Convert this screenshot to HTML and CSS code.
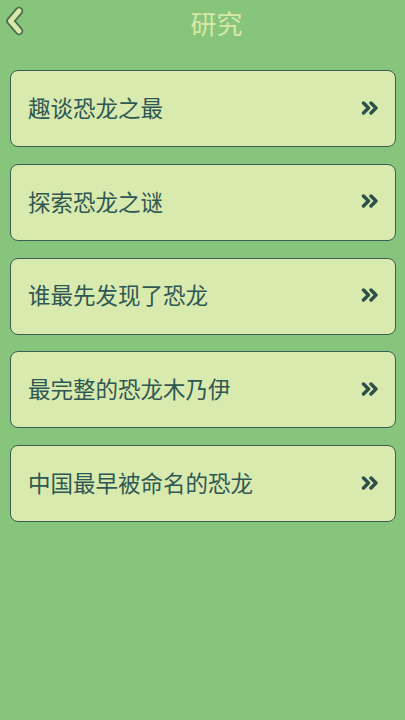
FILE: index.html
```html
<!DOCTYPE html>
<html lang="zh">
<head>
<meta charset="utf-8">
<link rel="stylesheet" href="styles.css">
</head>
<body>
<div class="page">
  <header class="topbar">
    <button class="back" aria-label="返回">
      <svg width="22" height="30" viewBox="0 0 22 30">
        <path d="M15 5 L6.5 15 L15 25" fill="none" stroke="#4d6e4f" stroke-width="8.5" stroke-linecap="round" stroke-linejoin="round"/>
        <path d="M15 5 L6.5 15 L15 25" fill="none" stroke="#d8e9aa" stroke-width="5" stroke-linecap="round" stroke-linejoin="round"/>
      </svg>
    </button>
    <h1 class="title">研究</h1>
  </header>
  <ul class="list">
    <li class="card"><span class="label">趣谈恐龙之最</span><svg class="more" width="18" height="14" viewBox="0 0 18 14"><path d="M2.5 2 L7.5 7 L2.5 12 M10 2 L15 7 L10 12" fill="none" stroke="#2c4f4a" stroke-width="3.4" stroke-linecap="round" stroke-linejoin="round"/></svg></li>
    <li class="card"><span class="label">探索恐龙之谜</span><svg class="more" width="18" height="14" viewBox="0 0 18 14"><path d="M2.5 2 L7.5 7 L2.5 12 M10 2 L15 7 L10 12" fill="none" stroke="#2c4f4a" stroke-width="3.4" stroke-linecap="round" stroke-linejoin="round"/></svg></li>
    <li class="card"><span class="label">谁最先发现了恐龙</span><svg class="more" width="18" height="14" viewBox="0 0 18 14"><path d="M2.5 2 L7.5 7 L2.5 12 M10 2 L15 7 L10 12" fill="none" stroke="#2c4f4a" stroke-width="3.4" stroke-linecap="round" stroke-linejoin="round"/></svg></li>
    <li class="card"><span class="label">最完整的恐龙木乃伊</span><svg class="more" width="18" height="14" viewBox="0 0 18 14"><path d="M2.5 2 L7.5 7 L2.5 12 M10 2 L15 7 L10 12" fill="none" stroke="#2c4f4a" stroke-width="3.4" stroke-linecap="round" stroke-linejoin="round"/></svg></li>
    <li class="card"><span class="label">中国最早被命名的恐龙</span><svg class="more" width="18" height="14" viewBox="0 0 18 14"><path d="M2.5 2 L7.5 7 L2.5 12 M10 2 L15 7 L10 12" fill="none" stroke="#2c4f4a" stroke-width="3.4" stroke-linecap="round" stroke-linejoin="round"/></svg></li>
  </ul>
</div>
</body>
</html>
```
FILE: styles.css
```css
html, body {
  margin: 0;
  padding: 0;
  background: #86c57b;
}
body {
  font-family: "Noto Sans CJK SC", "Noto Sans", sans-serif;
}
.page {
  width: 405px;
  height: 720px;
  background: #86c57b;
  overflow: hidden;
}
.topbar {
  height: 50px;
  display: flex;
  align-items: center;
  justify-content: center;
  position: relative;
}
.back {
  position: absolute;
  left: 4px;
  top: 6px;
  border: 0;
  padding: 0;
  background: none;
  width: 22px;
  height: 30px;
}
.back svg { display: block; }
.title {
  margin: 0 0 0 28px;
  font-size: 26px;
  font-weight: 400;
  color: #d6e8a6;
  line-height: 1;
  padding-bottom: 4px;
}
.list {
  list-style: none;
  margin: 20px 0 0 0;
  padding: 0 9px 0 10px;
  display: flex;
  flex-direction: column;
  gap: 16.75px;
}
.card {
  box-sizing: border-box;
  height: 77px;
  border: 1.5px solid #3d5c52;
  border-radius: 8px;
  background: #d9eaae;
  display: flex;
  align-items: center;
  justify-content: space-between;
  padding: 0 16px 3px 17px;
}
.label {
  font-size: 22.5px;
  color: #2f5753;
  line-height: 1;
}
.more {
  display: block;
  margin-top: 1px;
}
```
